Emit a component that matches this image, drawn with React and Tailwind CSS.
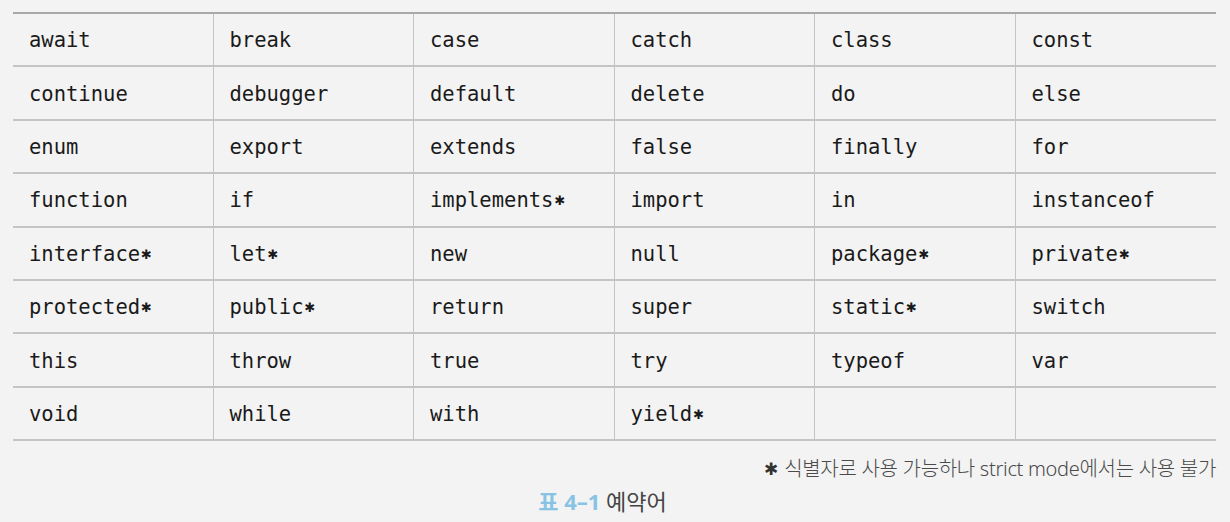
const rows = [
  ['await', 'break', 'case', 'catch', 'class', 'const'],
  ['continue', 'debugger', 'default', 'delete', 'do', 'else'],
  ['enum', 'export', 'extends', 'false', 'finally', 'for'],
  ['function', 'if', 'implements*', 'import', 'in', 'instanceof'],
  ['interface*', 'let*', 'new', 'null', 'package*', 'private*'],
  ['protected*', 'public*', 'return', 'super', 'static*', 'switch'],
  ['this', 'throw', 'true', 'try', 'typeof', 'var'],
  ['void', 'while', 'with', 'yield*', '', ''],
]

function Word({ text }) {
  if (!text.endsWith('*')) return text
  return (
    <>
      {text.slice(0, -1)}
      <span className="ml-[1px] inline-block w-[12px] font-['DejaVu_Sans',sans-serif] text-[13px]">✱</span>
    </>
  )
}

function App() {
  return (
    <div className="h-[522px] w-[1230px] bg-[#f3f3f3] pl-[13px] pr-[14px] pt-[12px]">
      <div className="border-t-2 border-[#a9a9a9]">
        {rows.map((row, i) => (
          <div key={i} className="grid h-[53.4px] grid-cols-6 border-b-2 border-[#c4c4c4]">
            {row.map((word, j) => (
              <div
                key={j}
                className={`flex items-center pl-4 pt-[2px] font-['DejaVu_Sans_Mono',monospace] text-[20.5px] text-[#1a1a1a] ${j < 5 ? 'border-r border-[#c4c4c4]' : ''}`}
              >
                <Word text={word} />
              </div>
            ))}
          </div>
        ))}
      </div>
      <p className="mt-[13px] flex items-center justify-end gap-[6px] font-['Noto_Sans','Noto_Sans_CJK_KR',sans-serif] text-[20px] font-light tracking-[-0.3px] text-[#4a4a4a]">
        <span className="font-['DejaVu_Sans',sans-serif] text-[17px] leading-none text-[#333]">✱</span>
        <span>식별자로 사용 가능하나 strict mode에서는 사용 불가</span>
      </p>
      <p className="mt-[1px] pr-[24px] text-center font-['Noto_Sans','Noto_Sans_CJK_KR',sans-serif] text-[22px] text-[#444]">
        <span className="font-bold text-[#88c3e6]">표 4–1</span> 예약어
      </p>
    </div>
  )
}

export default App
